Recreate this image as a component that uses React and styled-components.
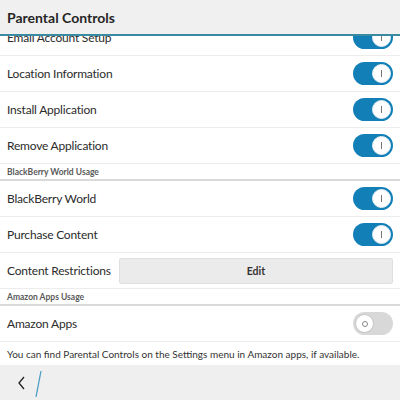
import React from 'react';
import styled, { createGlobalStyle } from 'styled-components';

const GlobalStyle = createGlobalStyle`
    html, body {
        margin: 0;
        padding: 0;
        background: #fff;
    }
    body {
        font-family: "Lato", "Open Sans", sans-serif;
        color: #2f2f2f;
    }
`;

const Screen = styled.div`
    width: 400px;
    height: 400px;
    display: flex;
    flex-direction: column;
    overflow: hidden;
    background: #fff;
`;

const TitleBar = styled.header`
    height: 34px;
    background: #f0f0f0;
    border-bottom: 2px solid #3a8aa1;
    display: flex;
    align-items: center;
    padding: 0 7px;
    flex-shrink: 0;
`;

const Title = styled.h1`
    margin: 0;
    font-size: 14px;
    font-weight: 700;
    color: #262626;
`;

const List = styled.div`
    flex: 1;
    overflow: hidden;
    display: flex;
    flex-direction: column;
`;

const Row = styled.div`
    height: 35px;
    margin-top: ${p => p.offset || 0}px;
    flex-shrink: 0;
    display: flex;
    align-items: center;
    padding: 0 7px;
    border-bottom: 1px solid #ececec;
    gap: 8px;
`;

const Label = styled.span`
    font-size: 12px;
    letter-spacing: -0.2px;
    color: #2b2b2b;
    flex: ${p => (p.grow ? 1 : 'none')};
    white-space: nowrap;
`;

const SectionHeader = styled.div`
    height: 15px;
    flex-shrink: 0;
    display: flex;
    align-items: center;
    padding: 0 7px;
    font-size: 8.5px;
    font-weight: 700;
    color: #5a5a5a;
    border-bottom: 2px solid #d9d9d9;
`;

const Toggle = styled.div`
    width: 40px;
    height: 23px;
    border-radius: 12px;
    box-sizing: border-box;
    background: ${p => (p.on ? '#137fb7' : '#d8d8d8')};
    display: flex;
    align-items: center;
    justify-content: ${p => (p.on ? 'flex-end' : 'flex-start')};
    padding: 0 2px;
    flex-shrink: 0;
`;

const Knob = styled.div`
    width: 19px;
    height: 19px;
    border-radius: 50%;
    background: #fff;
    box-sizing: border-box;
    border: 1px solid ${p => (p.on ? '#e6eef3' : '#c4c4c4')};
    display: flex;
    align-items: center;
    justify-content: center;
`;

const OnMark = styled.span`
    width: 1px;
    height: 7px;
    background: #777;
`;

const OffMark = styled.span`
    width: 6px;
    height: 6px;
    border-radius: 50%;
    border: 1px solid #888;
    box-sizing: border-box;
`;

const EditButton = styled.button`
    flex: 1;
    height: 26px;
    border: 1px solid #e0e0e0;
    border-radius: 2px;
    background: #ebebeb;
    font-family: "Lato", "Open Sans", sans-serif;
    font-size: 10.5px;
    font-weight: 700;
    color: #333;
    padding: 0;
`;

const Footnote = styled.p`
    margin: 0;
    height: 24px;
    flex-shrink: 0;
    display: flex;
    align-items: center;
    padding: 0 7px;
    font-size: 10px;
    color: #333;
    white-space: nowrap;
`;

const ActionBar = styled.footer`
    height: 35px;
    flex-shrink: 0;
    background: #efefef;
    display: flex;
    align-items: center;
    padding-left: 14px;
`;

const BackIcon = () => (
    <svg width="30" height="30" viewBox="0 0 30 30">
        <polyline points="10,9 5,15 10,21" fill="none" stroke="#222" strokeWidth="1.3" />
        <line x1="27" y1="3" x2="22" y2="29" stroke="#4a9dc4" strokeWidth="1.3" />
    </svg>
);

const Switch = ({ on }) => (
    <Toggle on={on}>
        <Knob on={on}>{on ? <OnMark /> : <OffMark />}</Knob>
    </Toggle>
);

const ToggleRow = ({ label, on = true, offset }) => (
    <Row offset={offset}>
        <Label grow>{label}</Label>
        <Switch on={on} />
    </Row>
);

export default function App() {
    return (
        <Screen>
            <GlobalStyle />
            <TitleBar>
                <Title>Parental Controls</Title>
            </TitleBar>
            <List>
                <ToggleRow label="Email Account Setup" offset={-16} />
                <ToggleRow label="Location Information" />
                <ToggleRow label="Install Application" />
                <ToggleRow label="Remove Application" />
                <SectionHeader>BlackBerry World Usage</SectionHeader>
                <ToggleRow label="BlackBerry World" />
                <ToggleRow label="Purchase Content" />
                <Row>
                    <Label>Content Restrictions</Label>
                    <EditButton>Edit</EditButton>
                </Row>
                <SectionHeader>Amazon Apps Usage</SectionHeader>
                <ToggleRow label="Amazon Apps" on={false} />
                <Footnote>You can find Parental Controls on the Settings menu in Amazon apps, if available.</Footnote>
            </List>
            <ActionBar>
                <BackIcon />
            </ActionBar>
        </Screen>
    );
}
